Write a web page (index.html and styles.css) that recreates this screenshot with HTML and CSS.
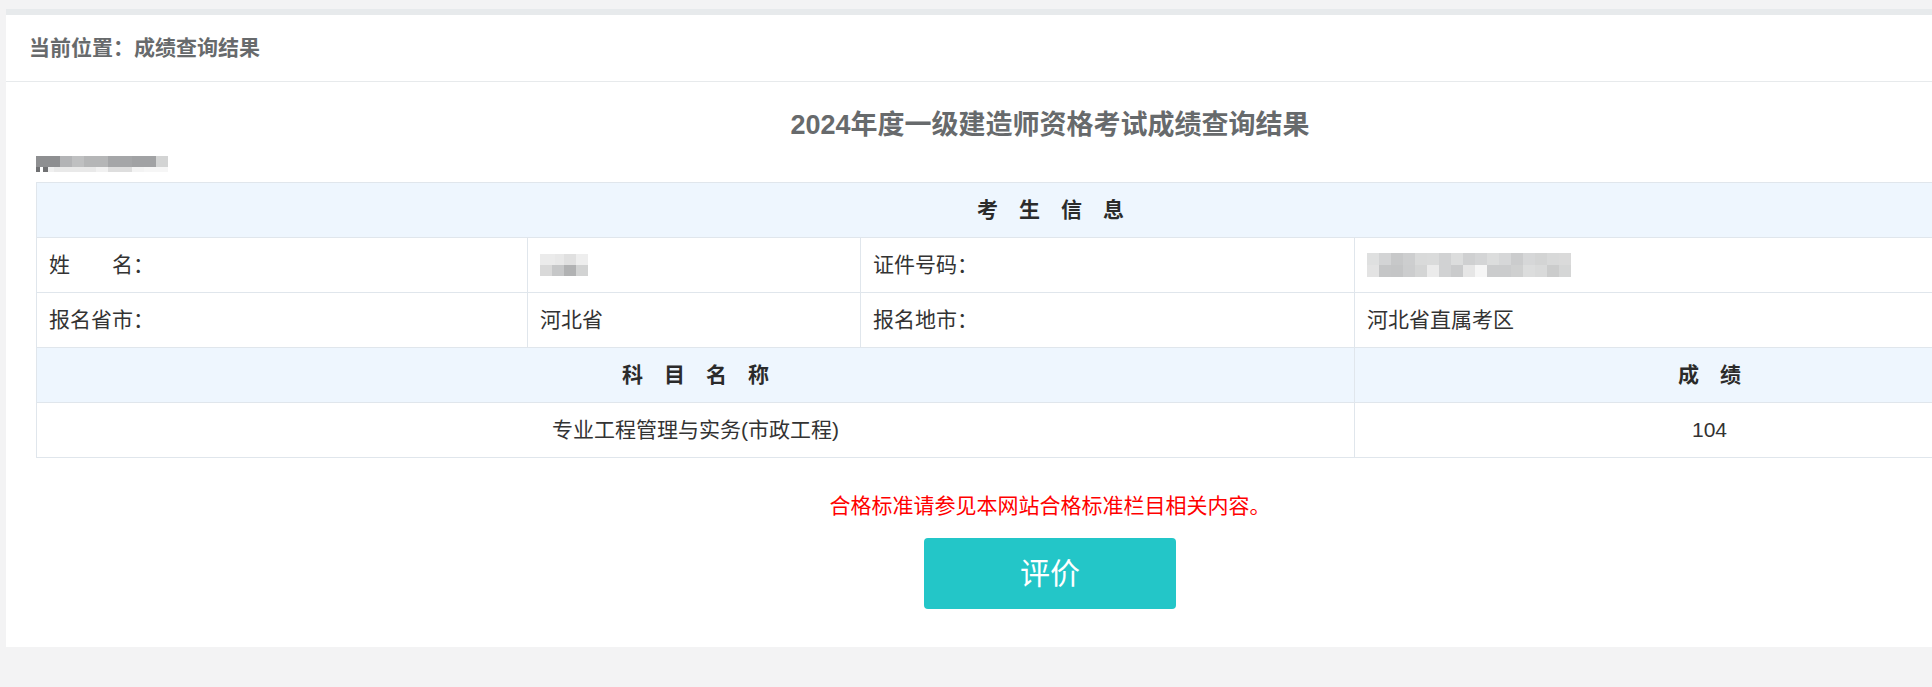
FILE: index.html
```html
<!DOCTYPE html>
<html lang="zh-CN">
<head>
<meta charset="utf-8">
<title>成绩查询结果</title>
<link rel="stylesheet" href="styles.css">
</head>
<body>
<div class="page">
  <div class="panel">
    <div class="crumb">当前位置：成绩查询结果</div>
    <div class="content">
      <h1 class="title">2024年度一级建造师资格考试成绩查询结果</h1>
      <div class="mosaic mosaic-no"></div>
      <table class="score">
        <colgroup><col class="c1"><col class="c2"><col class="c3"><col class="c4"></colgroup>
        <tr class="head"><th colspan="4"><span class="sp">考生信息</span></th></tr>
        <tr><td>姓　　名：</td><td><span class="mosaic mosaic-name"></span></td><td>证件号码：</td><td><span class="mosaic mosaic-id"></span></td></tr>
        <tr><td>报名省市：</td><td>河北省</td><td>报名地市：</td><td>河北省直属考区</td></tr>
        <tr class="head"><th colspan="3"><span class="sp">科目名称</span></th><th><span class="sp">成绩</span></th></tr>
        <tr><td colspan="3" class="center">专业工程管理与实务(市政工程)</td><td class="center">104</td></tr>
      </table>
      <p class="notice">合格标准请参见本网站合格标准栏目相关内容。</p>
      <div class="actions"><button class="btn" type="button">评价</button></div>
    </div>
  </div>
</div>
</body>
</html>
```

FILE: styles.css
```css
html {
  overflow: hidden;
}
body {
  margin: 0;
  background: #f3f3f4;
  font-family: "Liberation Sans", "Noto Sans CJK SC", sans-serif;
  color: #676a6c;
}
.page {
  padding: 9px 0 0 6px;
  width: 2088px;
}
.panel {
  width: 2088px;
  background: #fff;
  border-top: 6px solid #e7eaec;
  padding-bottom: 38px;
}
.crumb {
  height: 66px;
  line-height: 66px;
  padding-left: 23px;
  font-size: 21px;
  font-weight: bold;
  color: #676a6c;
  border-bottom: 1px solid #e7eaec;
}
.content {
  padding: 0 30px;
}
.title {
  margin: 23px 0 0;
  font-size: 27px;
  line-height: 40px;
  font-weight: bold;
  text-align: center;
  color: #676a6c;
}
.mosaic {
  display: block;
}
.mosaic-no {
  margin-top: 11px;
  width: 132px;
  height: 16px;
  background:
    linear-gradient(to right, #8e8f91 0 24px, #b3b4b6 24px 36px, #bfc0c1 36px 48px, #b5b6b7 48px 72px, #a5a6a8 72px 96px, #a1a2a4 96px 120px, #d3d4d4 120px 132px) top left / 100% 11px no-repeat,
    linear-gradient(to right, #707173 0 4px, #fff 4px 7px, #707173 7px 12px, #f0f0f0 12px 18px, #e9e9e9 18px 60px, #f1f1f1 60px 72px, #dedede 72px 96px, #f3f3f3 96px 108px, #f6f6f6 108px 132px) bottom left / 100% 5px no-repeat;
}
.mosaic-name {
  width: 48px;
  height: 22px;
  background:
    linear-gradient(to right, #ebebeb 0 15px, #e8e8e8 15px 24px, #e0e0e0 24px 36px, #eeeeee 36px 48px) top left / 100% 11px no-repeat,
    linear-gradient(to right, #d9d9d9 0 12px, #c6c7c8 12px 24px, #b1b2b3 24px 36px, #d2d3d3 36px 48px) bottom left / 100% 11px no-repeat;
}
.mosaic-id {
  width: 204px;
  height: 24px;
  background:
    linear-gradient(to right, #dfe0e0 0 12px, #d3d4d5 12px 24px, #c7c8c9 24px 36px, #cdcecf 36px 48px, #d9dada 48px 60px, #dadbdb 60px 72px, #d1d2d3 72px 84px, #dcdddd 84px 96px, #cfd0d1 96px 108px, #d4d5d6 108px 120px, #dcdddd 120px 132px, #d6d7d8 132px 144px, #cbcccd 144px 156px, #d6d7d8 156px 168px, #d3d4d4 168px 180px, #d8d9d9 180px 192px, #dadada 192px 204px) top left / 100% 12px no-repeat,
    linear-gradient(to right, #e3e3e3 0 12px, #c5c6c7 12px 24px, #c4c5c6 24px 36px, #cccdce 36px 48px, #d4d5d5 48px 60px, #ebebeb 60px 72px, #d1d2d3 72px 84px, #cacbcc 84px 96px, #e6e6e6 96px 108px, #f6f6f6 108px 120px, #cbcccd 120px 144px, #cfd0d0 144px 156px, #dcdddd 156px 168px, #d9dada 168px 180px, #cbcccc 180px 192px, #d5d6d6 192px 204px) bottom left / 100% 12px no-repeat;
}
.score {
  margin-top: 10px;
  width: 2028px;
  border-collapse: collapse;
  table-layout: fixed;
  font-size: 21px;
  color: #333;
}
.c1 { width: 491px; }
.c2 { width: 333px; }
.c3 { width: 494px; }
.c4 { width: 710px; }
.score tr {
  height: 55px;
}
.score td,
.score th {
  border: 1px solid #e0e6ec;
  padding: 0 12px;
  line-height: 30px;
  text-align: left;
  vertical-align: middle;
  font-weight: normal;
}
.score .head th {
  background: #eef6fe;
  text-align: center;
  font-weight: bold;
  color: #2b2b2b;
}
.sp {
  letter-spacing: 21px;
  margin-right: -21px;
}
.score td.center {
  text-align: center;
}
.notice {
  margin: 33px 0 0;
  line-height: 30px;
  font-size: 21px;
  color: #ff0000;
  text-align: center;
}
.actions {
  margin-top: 17px;
  text-align: center;
  line-height: 0;
}
.btn {
  width: 252px;
  height: 71px;
  border: none;
  border-radius: 4px;
  background: #23c6c8;
  color: #fff;
  font-family: "Liberation Sans", "Noto Sans CJK SC", sans-serif;
  font-size: 30px;
  line-height: 71px;
  padding: 0;
}
```
